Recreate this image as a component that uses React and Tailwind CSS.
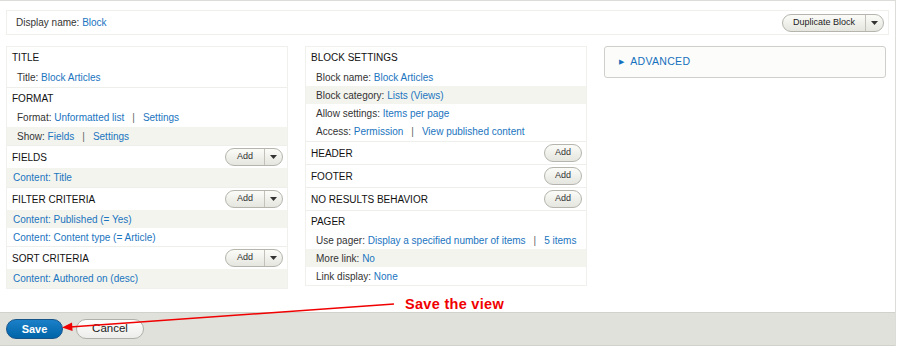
import React from 'react'

const font = { fontFamily: '"Liberation Sans", Arial, sans-serif' }

function Caret() {
  return (
    <svg width="7" height="4" viewBox="0 0 7 4" className="block">
      <path d="M0 0 L7 0 L3.5 4 Z" fill="#333" />
    </svg>
  )
}

function SplitAdd() {
  return (
    <div className="flex h-[18px] w-[58px] items-stretch overflow-hidden rounded-full border border-[#b5b5ad] bg-gradient-to-b from-[#fbfbf8] to-[#e6e6e0] text-[9px] normal-case text-[#333]">
      <span className="flex w-[38px] items-center justify-center">Add</span>
      <span className="flex flex-1 items-center justify-center border-l border-[#c2c2ba]">
        <Caret />
      </span>
    </div>
  )
}

function Add() {
  return (
    <div className="flex h-[18px] w-[38px] items-center justify-center rounded-full border border-[#b5b5ad] bg-gradient-to-b from-[#fbfbf8] to-[#e6e6e0] text-[9px] normal-case text-[#333]">
      Add
    </div>
  )
}

function Heading({ title, button, tall }) {
  return (
    <div className={`flex items-center justify-between border-t border-[#eeeeea] bg-white pl-[5px] pr-[4px] text-[10px] text-[#111] first:border-t-0 ${tall ? 'h-[23px]' : 'h-[21px]'}`}>
      <span className="uppercase">{title}</span>
      {button}
    </div>
  )
}

function Row({ children, shade, pad = 'pl-[10px]', h = 'h-[19px]' }) {
  return (
    <div className={`flex items-center ${h} ${pad} text-[10px] text-[#333] ${shade ? 'bg-[#f3f4ee]' : 'bg-white'}`}>
      {children}
    </div>
  )
}

const A = ({ children }) => <span className="text-[#1a74c0]">{children}</span>
const Sep = () => <span className="mx-[8px] text-[#666]">|</span>

export default function App() {
  return (
    <div className="relative h-[357px] w-[900px] overflow-hidden bg-white" style={font}>
      <div className="w-[896px] border-r border-t border-[#dcdcd8]">
        <div className="mx-[6px] mt-[9px] flex h-[25px] items-center justify-between border border-[#f0f0ec] pl-[9px] pr-[4px] text-[10px] text-[#333]">
          <span>Display name: <A>Block</A></span>
          <div className="flex h-[18px] w-[102px] items-stretch overflow-hidden rounded-full border border-[#b5b5ad] bg-gradient-to-b from-[#fbfbf8] to-[#e6e6e0] text-[9px] text-[#222]">
            <span className="flex w-[82px] items-center justify-center">Duplicate Block</span>
            <span className="flex flex-1 items-center justify-center border-l border-[#c2c2ba]">
              <Caret />
            </span>
          </div>
        </div>

        <div className="mt-[11px] flex items-start pl-[6px]">
          <div className="w-[282px] border border-[#f0f0ec]">
            <Heading title="Title" />
            <Row>Title:&nbsp;<A>Block Articles</A></Row>
            <Heading title="Format" />
            <Row>Format:&nbsp;<A>Unformatted list</A><Sep /><A>Settings</A></Row>
            <Row shade h="h-[18px]">Show:&nbsp;<A>Fields</A><Sep /><A>Settings</A></Row>
            <Heading title="Fields" tall button={<SplitAdd />} />
            <Row shade pad="pl-[6px]"><A>Content: Title</A></Row>
            <Heading title="Filter criteria" tall button={<SplitAdd />} />
            <Row shade pad="pl-[6px]" h="h-[18px]"><A>Content: Published (= Yes)</A></Row>
            <Row pad="pl-[6px]" h="h-[18px]"><A>Content: Content type (= Article)</A></Row>
            <Heading title="Sort criteria" tall button={<SplitAdd />} />
            <Row shade pad="pl-[6px]"><A>Content: Authored on (desc)</A></Row>
          </div>

          <div className="ml-[17px] w-[282px] border border-[#f0f0ec]">
            <Heading title="Block settings" />
            <Row h="h-[18px]">Block name:&nbsp;<A>Block Articles</A></Row>
            <Row shade h="h-[18px]">Block category:&nbsp;<A>Lists (Views)</A></Row>
            <Row h="h-[18px]">Allow settings:&nbsp;<A>Items per page</A></Row>
            <Row>Access:&nbsp;<A>Permission</A><Sep /><A>View published content</A></Row>
            <Heading title="Header" tall button={<Add />} />
            <Heading title="Footer" tall button={<Add />} />
            <Heading title="No results behavior" tall button={<Add />} />
            <Heading title="Pager" />
            <Row h="h-[18px]">Use pager:&nbsp;<A>Display a specified number of items</A><Sep /><A>5 items</A></Row>
            <Row shade h="h-[18px]">More link:&nbsp;<A>No</A></Row>
            <Row h="h-[18px]">Link display:&nbsp;<A>None</A></Row>
          </div>

          <div className="ml-[17px] flex h-[32px] w-[282px] items-center gap-[6px] rounded-[3px] border border-[#cfcfcb] bg-[#fcfcfa] pl-[14px] text-[10.5px] uppercase tracking-[0.3px] text-[#1571bd]">
            <span className="text-[7px]">&#9654;</span>
            <span>Advanced</span>
          </div>
        </div>

        <div className="mt-[23px] flex h-[34px] items-center gap-[13px] border-b border-t border-[#d2d2cd] bg-[#e1e1dc] pl-[6px]">
          <button type="button" className="flex h-[20px] w-[57px] items-center justify-center rounded-full border border-[#17548a] bg-gradient-to-b from-[#1a80c8] to-[#0064a8] text-[11px] font-bold text-white">
            Save
          </button>
          <button type="button" className="flex h-[20px] w-[68px] items-center justify-center rounded-full border border-[#b0b0aa] bg-gradient-to-b from-[#ffffff] to-[#ececea] text-[11.5px] text-[#222]">
            Cancel
          </button>
        </div>
      </div>

      <svg className="pointer-events-none absolute left-0 top-0" width="900" height="357">
        <line x1="394" y1="304" x2="70" y2="327" stroke="#f00000" strokeWidth="1.6" />
        <polygon points="62,327.5 72,322.5 72.6,331" fill="#f00000" />
      </svg>
      <span className="pointer-events-none absolute left-[405px] top-[294px] text-[14.5px] font-bold tracking-[0.3px] text-[#f00000]">
        Save the view
      </span>
    </div>
  )
}
